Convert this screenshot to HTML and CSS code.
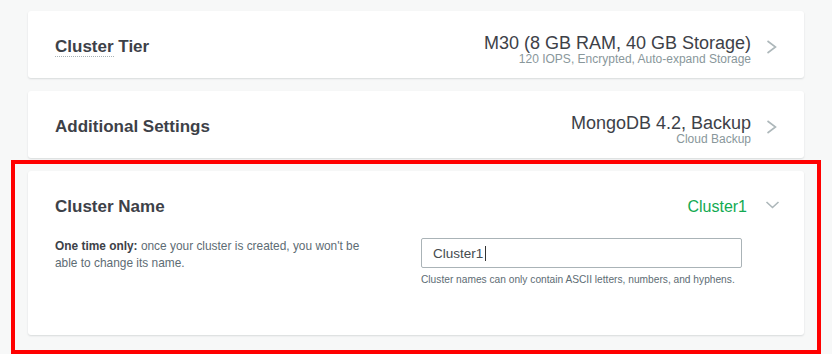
FILE: index.html
```html
<!DOCTYPE html>
<html lang="en">
<head>
    <meta charset="UTF-8">
    <meta name="viewport" content="width=device-width, initial-scale=1.0">
    <title>Create Cluster</title>
    <link rel="stylesheet" href="styles.css">
</head>
<body>

<div class="page">

    <div class="card">
        <div class="card-head">
            <h2 class="card-title"><span class="hint">Cluster</span> Tier</h2>
            <div class="card-summary">
                <div class="summary-text">
                    <div class="summary-main">M30 (8 GB RAM, 40 GB Storage)</div>
                    <div class="summary-sub">120 IOPS, Encrypted, Auto-expand Storage</div>
                </div>
                <svg class="chevron chevron-right" viewBox="0 0 16 14"><path d="M3.5 1 L11.5 7 L3.5 13"/></svg>
            </div>
        </div>
    </div>

    <div class="card">
        <div class="card-head">
            <h2 class="card-title">Additional Settings</h2>
            <div class="card-summary">
                <div class="summary-text">
                    <div class="summary-main">MongoDB 4.2, Backup</div>
                    <div class="summary-sub">Cloud Backup</div>
                </div>
                <svg class="chevron chevron-right" viewBox="0 0 16 14"><path d="M3.5 1 L11.5 7 L3.5 13"/></svg>
            </div>
        </div>
    </div>

    <div class="highlight">
        <div class="card card-open">
            <div class="card-head">
                <h2 class="card-title">Cluster Name</h2>
                <div class="card-summary">
                    <div class="summary-name">Cluster1</div>
                    <svg class="chevron chevron-down" viewBox="0 0 20 8"><path d="M6.5 1 L12.5 6.5 L18.5 1"/></svg>
                </div>
            </div>
            <div class="card-body">
                <p class="note"><strong>One time only:</strong> once your cluster is created, you won't be able to change its name.</p>
                <div class="field">
                    <div class="input">Cluster1<span class="caret"></span></div>
                    <p class="help">Cluster names can only contain ASCII letters, numbers, and hyphens.</p>
                </div>
            </div>
        </div>
    </div>

</div>

</body>
</html>
```

FILE: styles.css
```css
body {
    margin: 0;
    background-color: #f7f8f8;
    font-family: "Liberation Sans", Arial, sans-serif;
}
.page {
    width: 776px;
    padding: 11px 0 0 28px;
}
.card {
    box-sizing: border-box;
    height: 67px;
    margin-bottom: 13px;
    padding: 22px 24px 0 27px;
    background-color: #fff;
    border-radius: 3px;
    box-shadow: 0 1px 2px rgba(6, 22, 33, 0.13);
}
.card-head {
    display: flex;
    justify-content: space-between;
    align-items: flex-start;
}
.card-title {
    margin: 4px 0 0;
    font-size: 17px;
    line-height: 20px;
    font-weight: 700;
    color: #3d4148;
}
.hint {
    border-bottom: 1px dotted #a9b3b6;
}
.card-summary {
    display: flex;
    align-items: flex-start;
    gap: 13px;
}
.summary-text {
    text-align: right;
}
.summary-main {
    font-size: 18px;
    line-height: 21px;
    color: #3d4148;
}
.summary-sub {
    margin-top: -2px;
    font-size: 12px;
    line-height: 14px;
    color: #89979b;
}
.summary-name {
    margin-top: 3px;
    font-size: 16px;
    line-height: 21px;
    color: #13aa52;
}
.chevron {
    fill: none;
    stroke: #adb7ba;
    stroke-width: 1.6;
}
.chevron-right {
    width: 16px;
    height: 14px;
    margin-top: 7px;
}
.chevron-down {
    width: 20px;
    height: 8px;
    margin-top: 8px;
}
.highlight {
    margin: -11px -17px 0;
    padding: 7px 13px 15px;
    border: 4px solid #ff0000;
}
.card-open {
    height: 164px;
    margin-bottom: 0;
}
.card-body {
    display: grid;
    grid-template-columns: 366px 321px;
    margin-top: 21px;
}
.note {
    width: 320px;
    margin: 0;
    font-size: 11.9px;
    line-height: 17px;
    color: #5d6c74;
}
.note strong {
    color: #3d4148;
}
.input {
    box-sizing: border-box;
    display: flex;
    align-items: center;
    height: 30px;
    padding: 0 11px;
    border: 1px solid #aab3b7;
    border-radius: 2px;
    font-size: 13.5px;
    color: #464c4f;
}
.caret {
    width: 1px;
    height: 15px;
    margin-left: 2px;
    background-color: #333;
}
.help {
    margin: 6px 0 0;
    font-size: 10.2px;
    line-height: 12px;
    color: #5d6c74;
}
```
